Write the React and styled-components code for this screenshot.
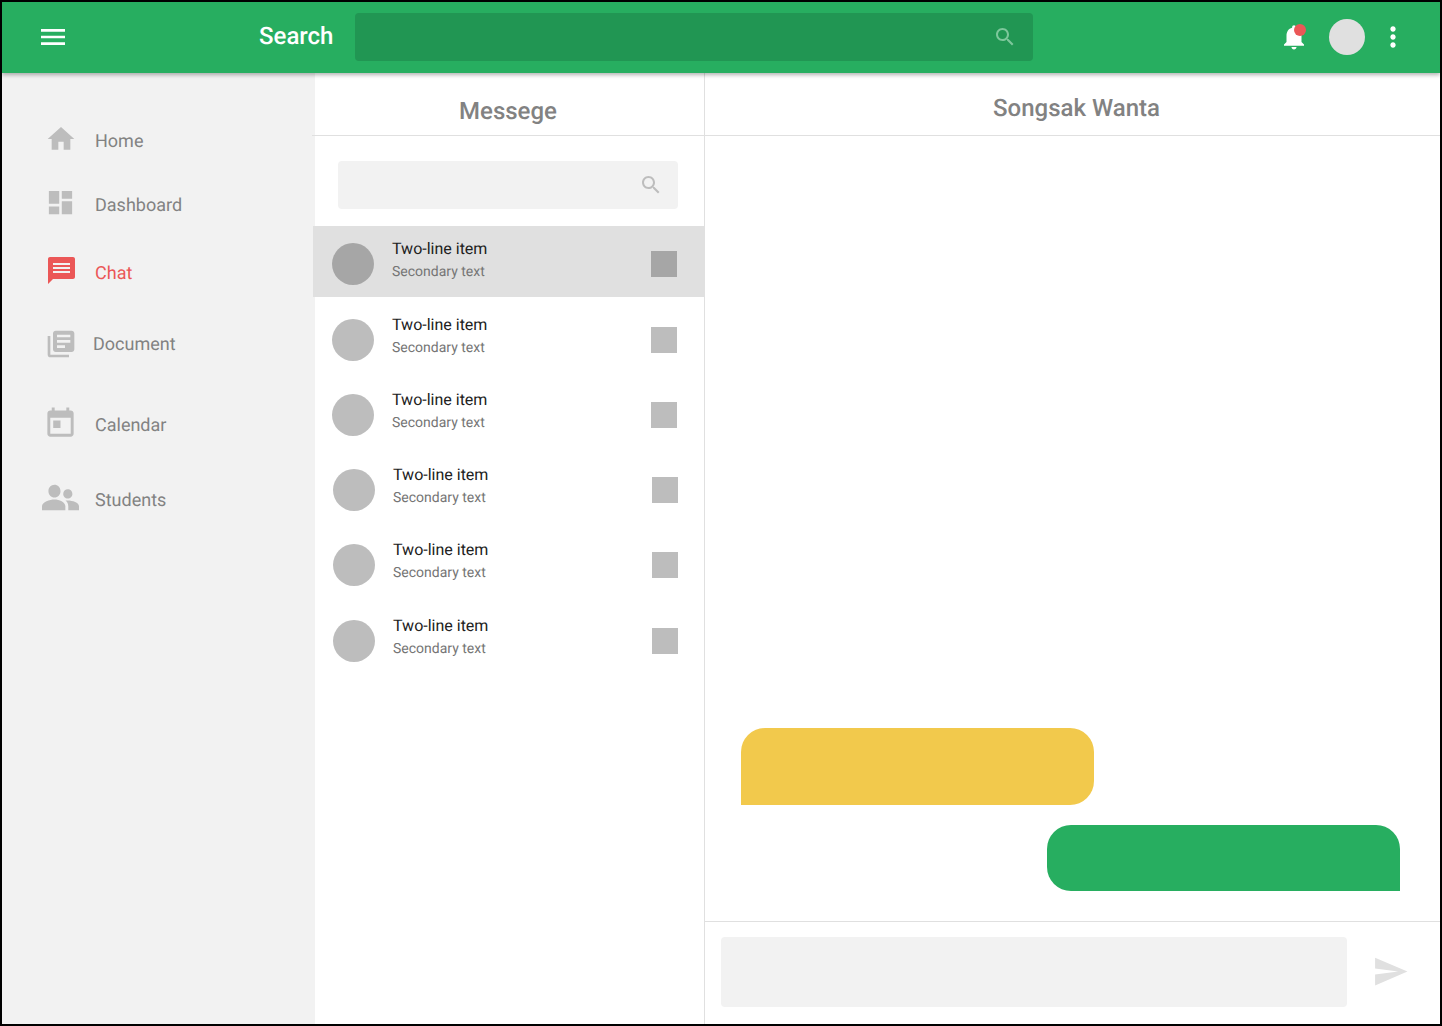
import styled, { createGlobalStyle } from 'styled-components';

const GlobalStyle = createGlobalStyle`
    html, body {
        margin: 0;
        padding: 0;
        background: #000;
    }
    body {
        font-family: Roboto, "Liberation Sans", sans-serif;
        text-rendering: geometricPrecision;
    }
`;

const Frame = styled.div`
    width: 1442px;
    height: 1026px;
    box-sizing: border-box;
    border: 2px solid #000;
    background: #fff;
    display: flex;
    flex-direction: column;
    overflow: hidden;
`;

const TopBar = styled.header`
    height: 71px;
    flex-shrink: 0;
    box-sizing: border-box;
    background: #27ae60;
    display: flex;
    align-items: center;
    padding: 0 31px 2px 35px;
    box-shadow: 0 2px 4px rgba(0, 0, 0, 0.3);
    position: relative;
    z-index: 2;
`;

const Glyph = styled.svg`
    display: block;
    flex-shrink: 0;
    fill: ${(p) => p.$color || '#fff'};
`;

const SearchLabel = styled.span`
    width: 96px;
    margin: -2px 0 0 190px;
    flex-shrink: 0;
    font-size: 24px;
    line-height: 28px;
    font-weight: 500;
    color: #fff;
`;

const TopSearch = styled.div`
    width: 678px;
    height: 48px;
    margin-top: 1px;
    border-radius: 4px;
    background: #219653;
    display: flex;
    align-items: center;
    justify-content: flex-end;
    padding-right: 16px;
    box-sizing: border-box;
`;

const TopActions = styled.div`
    margin-left: auto;
    display: flex;
    align-items: center;
`;

const BellWrap = styled.div`
    position: relative;
    width: 30px;
    height: 30px;
    margin-right: 20px;
`;

const BellDot = styled.span`
    position: absolute;
    left: 15px;
    top: 2px;
    width: 12px;
    height: 12px;
    border-radius: 50%;
    background: #eb5757;
`;

const UserAvatar = styled.div`
    width: 36px;
    height: 36px;
    border-radius: 50%;
    background: #e0e0e0;
    margin-right: 12px;
`;

const Body = styled.div`
    flex: 1;
    min-height: 0;
    display: flex;
`;

const Sidebar = styled.nav`
    width: 313px;
    flex-shrink: 0;
    background: #f2f2f2;
`;

const NavItem = styled.div`
    height: 40px;
    margin-top: ${(p) => p.$top}px;
    display: flex;
    align-items: center;
    font-size: 18px;
    color: ${(p) => (p.$active ? '#eb5757' : '#828282')};
`;

const NavSlot = styled.div`
    width: ${(p) => p.$width}px;
    flex-shrink: 0;
    display: flex;
    align-items: center;
    padding-left: ${(p) => p.$left}px;
    margin-top: ${(p) => p.$lift * -2}px;
    box-sizing: border-box;
`;

const MessagePane = styled.section`
    width: 390px;
    flex-shrink: 0;
    box-sizing: border-box;
    border-right: 1px solid #e0e0e0;
    display: flex;
    flex-direction: column;
`;

const PaneHeader = styled.div`
    height: 63px;
    flex-shrink: 0;
    box-sizing: border-box;
    margin-left: ${(p) => p.$bleed || 0}px;
    border-bottom: 1px solid #e0e0e0;
    padding: ${(p) => p.$pad}px 0 0 ${(p) => p.$indent || 0}px;
    text-align: center;
    font-size: 24px;
    line-height: 28px;
    font-weight: 500;
    color: #828282;
`;

const MessageSearch = styled.div`
    width: 340px;
    height: 48px;
    margin: 25px 0 17px 23px;
    border-radius: 4px;
    background: #f2f2f2;
    display: flex;
    align-items: center;
    justify-content: flex-end;
    padding-right: 15px;
    box-sizing: border-box;
`;

const ThreadList = styled.div`
    display: flex;
    flex-direction: column;
    margin-left: -2px;
`;

const ThreadRow = styled.div`
    height: 71px;
    margin-top: ${(p) => p.$gap}px;
    flex-shrink: 0;
    box-sizing: border-box;
    display: flex;
    align-items: flex-start;
    padding-left: ${(p) => 19 + p.$shift}px;
    background: ${(p) => (p.$selected ? '#e0e0e0' : 'transparent')};
`;

const ThreadAvatar = styled.div`
    width: 42px;
    height: 42px;
    margin-top: 17px;
    border-radius: 50%;
    flex-shrink: 0;
    background: ${(p) => (p.$selected ? '#a6a6a6' : '#bdbdbd')};
`;

const ThreadText = styled.div`
    width: 259px;
    flex-shrink: 0;
    padding: 12px 0 0 18px;
    box-sizing: border-box;
`;

const ThreadTitle = styled.div`
    font-size: 16px;
    line-height: 22px;
    color: #212121;
`;

const ThreadSub = styled.div`
    font-size: 14px;
    line-height: 22px;
    margin-top: 1px;
    color: #757575;
`;

const ThreadSquare = styled.div`
    width: 26px;
    height: 26px;
    margin: 25px 0 0 18px;
    flex-shrink: 0;
    background: ${(p) => (p.$selected ? '#a6a6a6' : '#bdbdbd')};
`;

const ChatPane = styled.section`
    flex: 1;
    min-width: 0;
    display: flex;
    flex-direction: column;
`;

const ChatBody = styled.div`
    flex: 1;
    min-height: 0;
    display: flex;
    flex-direction: column;
    justify-content: flex-end;
    gap: 20px;
    padding: 0 40px 30px 36px;
`;

const Bubble = styled.div`
    width: 353px;
    height: ${(p) => p.$height}px;
    align-self: ${(p) => (p.$mine ? 'flex-end' : 'flex-start')};
    background: ${(p) => (p.$mine ? '#27ae60' : '#f2c94c')};
    border-radius: ${(p) => (p.$mine ? '24px 24px 0 24px' : '24px 24px 24px 0')};
`;

const Composer = styled.div`
    height: 103px;
    flex-shrink: 0;
    box-sizing: border-box;
    border-top: 1px solid #e0e0e0;
    padding: 15px 0 0 16px;
    display: flex;
    align-items: flex-start;
`;

const ComposerInput = styled.div`
    width: 626px;
    height: 70px;
    border-radius: 4px;
    background: #f2f2f2;
`;

const SendSlot = styled.div`
    margin: 16px 0 0 25px;
`;

const SearchIcon = ({ color, size = 24 }) => (
    <Glyph $color={color} width={size} height={size} viewBox="0 0 24 24">
        <path d="M15.5 14h-.79l-.28-.27C15.41 12.59 16 11.11 16 9.5 16 5.91 13.09 3 9.5 3S3 5.91 3 9.5 5.91 16 9.5 16c1.61 0 3.09-.59 4.23-1.57l.27.28v.79l5 4.99L20.49 19l-4.99-5zm-6 0C7.01 14 5 11.99 5 9.5S7.01 5 9.5 5 14 7.01 14 9.5 11.99 14 9.5 14z" />
    </Glyph>
);

const navItems = [
    { label: 'Home', top: 48, left: 43, lift: 2, width: 93, size: 32, box: '0 0 24 24', d: 'M10 20v-6h4v6h5v-8h3L12 3 2 12h3v8z' },
    { label: 'Dashboard', top: 24, left: 43, lift: 2.5, width: 93, size: 31, box: '0 0 24 24', d: 'M3 13h8V3H3v10zm0 8h8v-6H3v6zm10 0h8V11h-8v10zm0-18v6h8V3h-8z' },
    { label: 'Chat', top: 28, left: 46, lift: 2.25, width: 93, size: 27, box: '0 0 27 27', active: true, d: 'M2 0h23c1.1 0 2 .9 2 2v18c0 1.1-.9 2-2 2H5l-5 5V2C0 .9.9 0 2 0zm3 6v2h17V6H5zm0 4v2h17v-2H5zm0 4v2h17v-2H5z' },
    { label: 'Document', top: 31, left: 43, lift: 0.5, width: 91, size: 32, box: '0 0 24 24', d: 'M4 6H2v14c0 1.1.9 2 2 2h14v-2H4V6zm16-4H8c-1.1 0-2 .9-2 2v12c0 1.1.9 2 2 2h12c1.1 0 2-.9 2-2V4c0-1.1-.9-2-2-2zm-1 9H9V9h10v2zm-4 4H9v-2h6v2zm4-8H9V5h10v2z' },
    { label: 'Calendar', top: 41, left: 41, lift: 2, width: 93, size: 35, box: '0 0 24 24', d: 'M19 3h-1V1h-2v2H8V1H6v2H5c-1.11 0-1.99.9-1.99 2L3 19c0 1.1.89 2 2 2h14c1.1 0 2-.9 2-2V5c0-1.1-.9-2-2-2h-0zm0 16H5V8h14v11zM7 10h5v5H7z' },
    { label: 'Students', top: 35, left: 39.5, lift: 2.5, width: 93, size: 37, box: '0 -6 38 38', d: 'M12.8 13c3.4 0 6.2-2.8 6.2-6.5S16.2 0 12.8 0 6.6 2.9 6.6 6.5 9.4 13 12.8 13zm13.7 1c2.6 0 4.7-2.1 4.7-4.7s-2.1-4.7-4.7-4.7-4.7 2.1-4.7 4.7 2.1 4.700 4.7 4.700zM12.8 15C8 15 0 17.6 0 22v4h24v-4c0-4.4-6.4-7-11.2-7zm13.7 1c-.8 0-1.6.1-2.4.2 1.600 1.3 2.900 3.2 2.900 5.800v4h11v-4c0-3.800-6.700-6-11.500-6z' },
];

const threads = [
    { selected: true, shift: 0, gap: 0 },
    { selected: false, shift: 0, gap: 5 },
    { selected: false, shift: 0, gap: 4 },
    { selected: false, shift: 1, gap: 4 },
    { selected: false, shift: 1, gap: 4 },
    { selected: false, shift: 1, gap: 5 },
];

const App = () => {
    return (<>
        <GlobalStyle />
        <Frame>
            <TopBar>
                <Glyph width="32" height="32" viewBox="0 0 24 24">
                    <path d="M3 18h18v-2H3v2zm0-5h18v-2H3v2zm0-7v2h18V6H3z" />
                </Glyph>
                <SearchLabel>Search</SearchLabel>
                <TopSearch>
                    <SearchIcon color="#7dc79b" />
                </TopSearch>
                <TopActions>
                    <BellWrap>
                        <Glyph width="30" height="30" viewBox="0 0 24 24">
                            <path d="M12 22c1.1 0 2-.9 2-2h-4c0 1.1.89 2 2 2zm6-6v-5c0-3.07-1.64-5.64-4.5-6.32V4c0-.83-.67-1.5-1.5-1.5s-1.5.67-1.5 1.5v.68C7.63 5.36 6 7.92 6 11v5l-2 2v1h16v-1l-2-2z" />
                        </Glyph>
                        <BellDot />
                    </BellWrap>
                    <UserAvatar />
                    <Glyph width="32" height="32" viewBox="0 0 24 24">
                        <path d="M12 8c1.1 0 2-.9 2-2s-.9-2-2-2-2 .9-2 2 .9 2 2 2zm0 2c-1.1 0-2 .9-2 2s.9 2 2 2 2-.9 2-2-.9-2-2-2zm0 6c-1.1 0-2 .9-2 2s.9 2 2 2 2-.9 2-2-.9-2-2-2z" />
                    </Glyph>
                </TopActions>
            </TopBar>
            <Body>
                <Sidebar>
                    {navItems.map((item) => (
                        <NavItem key={item.label} $top={item.top} $active={item.active}>
                            <NavSlot $width={item.width} $left={item.left} $lift={item.lift}>
                                <Glyph $color={item.active ? '#eb5757' : '#bdbdbd'} width={item.size} height={item.size} viewBox={item.box}>
                                    <path d={item.d} />
                                </Glyph>
                            </NavSlot>
                            {item.label}
                        </NavItem>
                    ))}
                </Sidebar>
                <MessagePane>
                    <PaneHeader $pad={24} $bleed={-3}>Messege</PaneHeader>
                    <MessageSearch>
                        <SearchIcon color="#bdbdbd" />
                    </MessageSearch>
                    <ThreadList>
                        {threads.map((thread, index) => (
                            <ThreadRow key={index} $selected={thread.selected} $shift={thread.shift} $gap={thread.gap}>
                                <ThreadAvatar $selected={thread.selected} />
                                <ThreadText>
                                    <ThreadTitle>Two-line item</ThreadTitle>
                                    <ThreadSub>Secondary text</ThreadSub>
                                </ThreadText>
                                <ThreadSquare $selected={thread.selected} />
                            </ThreadRow>
                        ))}
                    </ThreadList>
                </MessagePane>
                <ChatPane>
                    <PaneHeader $pad={21} $indent={8}>Songsak Wanta</PaneHeader>
                    <ChatBody>
                        <Bubble $height={77} />
                        <Bubble $height={66} $mine />
                    </ChatBody>
                    <Composer>
                        <ComposerInput />
                        <SendSlot>
                            <Glyph $color="#e0e0e0" width="37" height="37" viewBox="0 0 24 24">
                                <path d="M2.01 21L23 12 2.01 3 2 10l15 2-15 2z" />
                            </Glyph>
                        </SendSlot>
                    </Composer>
                </ChatPane>
            </Body>
        </Frame>
    </>);
};

export default App;
